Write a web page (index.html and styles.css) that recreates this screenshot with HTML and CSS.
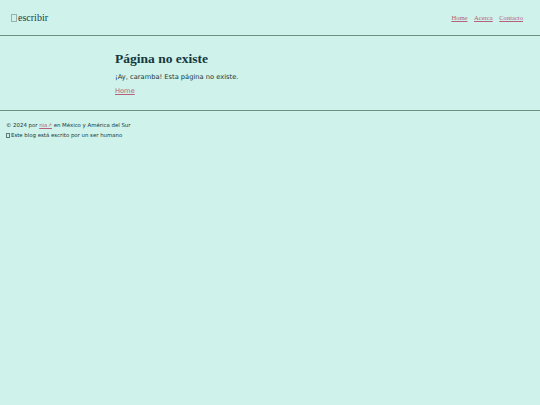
FILE: index.html
```html
<!DOCTYPE html>
<html lang="es">
<head>
    <meta charset="UTF-8" />
    <meta name="viewport" content="width=device-width, initial-scale=1.0" />
    <title>Página no existe</title>
    <link rel="stylesheet" href="styles.css">
</head>
<body>
<header class="site-header">
    <a class="site-header__logo" href="#"><span class="tofu"></span>escribir</a>
    <nav class="site-header__nav">
        <a href="#">Home</a>
        <a href="#">Acerca</a>
        <a href="#">Contacto</a>
    </nav>
</header>

<main class="content">
    <h1 class="content__title">Página no existe</h1>
    <p class="content__text">¡Ay, caramba! Esta página no existe.</p>
    <a class="content__link" href="#">Home</a>
</main>

<footer class="site-footer">
    <p>© 2024 por <a href="#">nia↗</a> en México y América del Sur</p>
    <p><span class="tofu tofu--small"></span>Este blog está escrito por un ser humano</p>
</footer>
</body>
</html>
```

FILE: styles.css
```css
*,
*::before,
*::after {
    box-sizing: border-box;
}

html,
body {
    margin: 0;
    padding: 0;
}

body {
    background: #cff2ea;
    color: #143840;
    font-family: 'DejaVu Sans', Verdana, sans-serif;
    min-height: 100vh;
}

a {
    color: #b5607c;
}

.tofu {
    display: inline-block;
    width: 6px;
    height: 8px;
    border: 1px solid #9ab0aa;
    margin-right: 1px;
    vertical-align: -1px;
}
.tofu--small {
    width: 4px;
    height: 5px;
    border-color: #5d7a76;
    vertical-align: -1px;
}

.site-header {
    height: 36px;
    display: flex;
    justify-content: space-between;
    align-items: center;
    padding: 0 17px 1px 11px;
    border-bottom: 1px solid #6f8f82;
    font-family: 'Liberation Serif', 'Times New Roman', serif;
}
.site-header__logo {
    color: #1e3c44;
    text-decoration: none;
    font-size: 10px;
}
.site-header__nav {
    display: flex;
    gap: 6.5px;
    font-size: 6.6px;
}

.content {
    padding: 15px 0 15px 115px;
    border-bottom: 1px solid #6f8f82;
    font-size: 6.7px;
    line-height: 8px;
}
.content__title {
    font-family: 'Liberation Serif', 'Times New Roman', serif;
    font-size: 13.5px;
    line-height: 16px;
    margin: 0 0 6px;
}
.content__text {
    margin: 0 0 6px;
}

.site-footer {
    padding: 11px 6px;
    font-size: 5.4px;
    line-height: 6px;
}
.site-footer p {
    margin: 0 0 4px;
}
```
